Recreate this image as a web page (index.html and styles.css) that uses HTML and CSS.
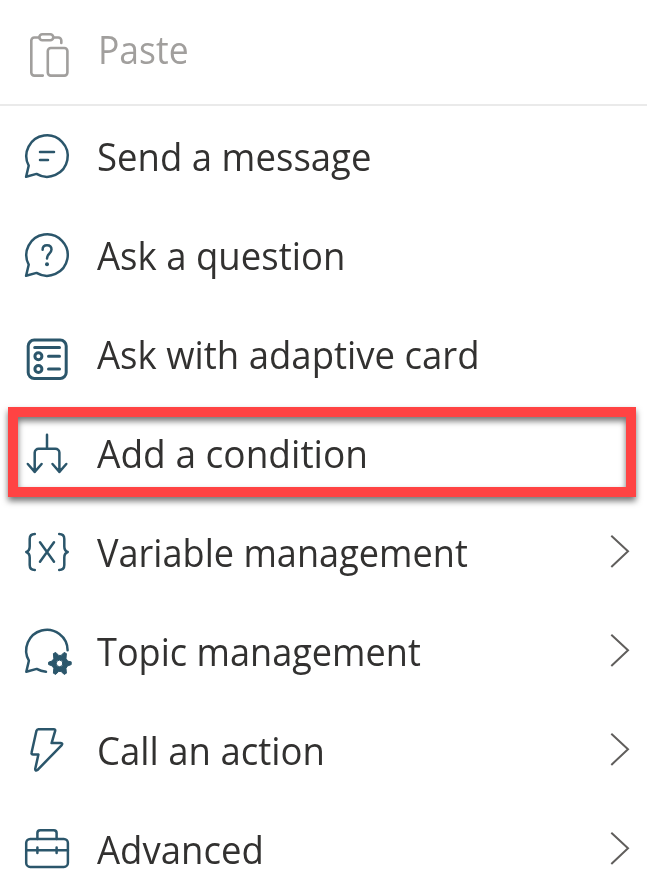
FILE: index.html
```html
<!DOCTYPE html>
<html lang="en">
<head>
<meta charset="utf-8">
<title>Add node menu</title>
<link rel="stylesheet" href="styles.css">
</head>
<body>
<nav class="menu">
  <div class="item paste">
    <svg class="icon" viewBox="0 0 80 105"><path d="M42.8 75.6H34.3a3 3 0 0 1-3-3V40.5a3 3 0 0 1 3-3h5M53.5 37.5h4.8a3 3 0 0 1 3 3V43"/><rect x="39.3" y="34.2" width="14" height="6" rx="3"/><rect x="47.8" y="48" width="19.6" height="27.6" rx="3"/></svg>
    <span class="label">Paste</span>
  </div>
  <div class="item">
    <svg class="icon" viewBox="0 0 80 99"><path d="M28.7 59.7A20.7 20.7 0 1 1 36.5 67.9L26.1 70.8zM40 46H54M40 54h8"/></svg>
    <span class="label">Send a message</span>
  </div>
  <div class="item">
    <svg class="icon" viewBox="0 0 80 99"><path d="M28.7 59.7A20.7 20.7 0 1 1 36.5 67.9L26.1 70.8zM42.6 44.7c0-2.8 1.7-4.5 4.4-4.5s4.5 1.8 4.5 4.4c0 4-4.5 4.3-4.5 8.8"/><circle class="solid" cx="47" cy="59.3" r="2"/></svg>
    <span class="label">Ask a question</span>
  </div>
  <div class="item">
    <svg class="icon heavy" viewBox="0 0 80 99"><rect x="28.2" y="36.1" width="38" height="38.3" rx="6"/><path d="M34.7 43.4h24.8M48.5 52.3h11M48.5 65h11"/><circle cx="38.4" cy="52.3" r="3.5"/><circle cx="38.4" cy="65" r="3.5"/></svg>
    <span class="label">Ask with adaptive card</span>
  </div>
  <div class="item selected">
    <svg class="icon" viewBox="0 0 80 99"><path d="M47 31.7v14M34.7 69V49.5a4 4 0 0 1 4-3.8h16.7a4 4 0 0 1 4 3.8V69M27.8 61l6.9 7.8 6.9-7.8M52.5 61l6.9 7.8 6.9-7.8"/></svg>
    <span class="label condition">Add a condition</span>
  </div>
  <div class="item">
    <svg class="icon" viewBox="0 0 80 99"><path d="M34.8 32c-3.5 0-5.1 1.6-5.1 5v7.5c0 3-1 4.6-3.4 5.5 2.4.9 3.4 2.5 3.4 5.5V63c0 3.4 1.6 5 5.1 5M59.2 32c3.5 0 5.1 1.6 5.1 5v7.5c0 3 1 4.6 3.4 5.5-2.4.9-3.4 2.5-3.4 5.5V63c0 3.4-1.6 5-5.1 5M40 40.2l14 19.6M54 40.2L40 59.8"/></svg>
    <span class="label management">Variable management</span>
    <svg class="chevron" viewBox="0 0 30 99"><path d="M4.3 33.7L21 49.3 4.3 64.9"/></svg>
  </div>
  <div class="item">
    <svg class="icon" viewBox="0 0 80 99"><path d="M67.6 49.3A20.7 20.7 0 1 0 28.9 59.7L26.3 70.8 36.7 67.9Q41 70.4 46 70.8"/><path class="gear" d="M71.2 61.2v2.4l-3.8 1.4-1.4 2.4.4 4.8-2.3 1.2-3-3h-2.4l-3 3-2.3-1.2.4-4.8-1.4-2.4-3.8-1.4v-2.4l3.8-1.4 1.4-2.4-.4-4.8 2.3-1.2 3 3h2.4l3-3 2.3 1.2-.4 4.8 1.4 2.4zM62.9 62.4a3.3 3.3 0 1 0-6.6 0 3.3 3.3 0 0 0 6.6 0z"/></svg>
    <span class="label management">Topic management</span>
    <svg class="chevron" viewBox="0 0 30 99"><path d="M4.3 33.7L21 49.3 4.3 64.9"/></svg>
  </div>
  <div class="item">
    <svg class="icon" viewBox="0 0 80 99"><path d="M38.4 29.2h15.3q2 0 1.4 2L51.6 43.1h9.1q2.5.3.8 2.2L37.4 70.1q-2 1.4-2.2-1l3.2-14.6h-5.2q-2.1-.2-1.6-2L36.4 31q.6-1.8 2-1.8z"/></svg>
    <span class="label">Call an action</span>
    <svg class="chevron" viewBox="0 0 30 99"><path d="M4.3 33.7L21 49.3 4.3 64.9"/></svg>
  </div>
  <div class="item">
    <svg class="icon" viewBox="0 0 80 99"><rect x="26.2" y="39.9" width="41.7" height="28" rx="4"/><path d="M37.4 39.9V34a2.8 2.8 0 0 1 2.8-2.8h13.6a2.8 2.8 0 0 1 2.8 2.8v5.9M26.2 51.3h41.7M37.4 48.5v5.5M56.6 48.5v5.5"/></svg>
    <span class="label">Advanced</span>
    <svg class="chevron" viewBox="0 0 30 99"><path d="M4.3 33.7L21 49.3 4.3 64.9"/></svg>
  </div>
</nav>
</body>
</html>
```
FILE: styles.css
```css
body {
  margin: 0;
  background: #fff;
  overflow: hidden;
  font-family: "Open Sans", "Noto Sans", sans-serif;
}
.menu { width: 647px; height: 888px; overflow: hidden; }
.item {
  position: relative;
  display: flex;
  height: 99px;
  color: #323130;
}
.paste {
  height: 104px;
  border-bottom: 2px solid #eaeaea;
  color: #a19f9d;
}
.icon {
  flex: none;
  width: 80px;
  height: 99px;
  fill: none;
  stroke: #2b566b;
  stroke-width: 2.5;
  stroke-linecap: round;
  stroke-linejoin: round;
}
.paste .icon { height: 105px; stroke: #a19f9d; stroke-width: 2.6; }
.heavy { stroke-width: 3; }
.icon .solid { fill: #2b566b; stroke: none; }
.icon .gear { fill: #2b566b; fill-rule: evenodd; stroke-width: 1; }
.label {
  margin-left: 17px;
  font-size: 39px;
  line-height: 54px;
  padding-top: 23px;
  white-space: nowrap;
  transform: scaleX(.937);
  transform-origin: 0 0;
}
.label.condition { transform: scaleX(.95); }
.label.management { transform: scaleX(.926); }
.paste .label { padding-top: 22px; margin-left: 18px; transform: scaleX(.91); }
.chevron {
  flex: none;
  width: 30px;
  height: 99px;
  margin-left: auto;
  margin-right: 10px;
  fill: none;
  stroke: #605e5c;
  stroke-width: 2;
}
.selected::after {
  content: "";
  position: absolute;
  left: 8px;
  right: 11px;
  top: 4px;
  height: 70px;
  border: 10px solid #ff4343;
  filter: drop-shadow(0 4px 3px rgba(0, 0, 0, .55));
}
```
